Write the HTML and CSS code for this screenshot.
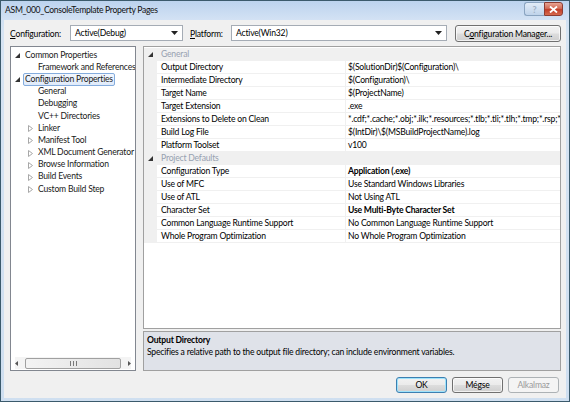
FILE: index.html
```html
<!DOCTYPE html>
<html>
<head>
<meta charset="utf-8">
<title>ASM_000_ConsoleTemplate Property Pages</title>
<link rel="stylesheet" href="styles.css">
</head>
<body>
<div class="window">
  <div class="titlebar">
    <span class="title">ASM_000_ConsoleTemplate Property Pages</span>
    <div class="caption-btns">
      <span class="cbtn help">?</span>
      <span class="cbtn close"><svg width="9" height="7" viewBox="0 0 9 7"><path d="M1 0.5 L8 6.5 M8 0.5 L1 6.5" stroke="#fff" stroke-width="1.8"/></svg></span>
    </div>
  </div>
  <div class="client">
    <div class="toolbar">
      <span class="lbl lbl-config"><u>C</u>onfiguration:</span>
      <div class="combo combo-config"><span class="combo-text">Active(Debug)</span><svg class="combo-arrow" width="7" height="4" viewBox="0 0 7 4"><path d="M0 0 H7 L3.5 4 Z" fill="#222"/></svg></div>
      <span class="lbl lbl-platform"><u>P</u>latform:</span>
      <div class="combo combo-platform"><span class="combo-text">Active(Win32)</span><svg class="combo-arrow" width="7" height="4" viewBox="0 0 7 4"><path d="M0 0 H7 L3.5 4 Z" fill="#222"/></svg></div>
      <button class="btn btn-cm">C<u>o</u>nfiguration Manager...</button>
    </div>
    <div class="main">
      <div class="tree">
        <ul class="tree-list">
          <li class="node lvl0"><svg class="exp" width="5" height="5" viewBox="0 0 5 5"><path d="M5 0 V5 H0 Z" fill="#333"/></svg><span class="txt">Common Properties</span></li>
          <li class="node lvl1"><span class="txt">Framework and References</span></li>
          <li class="node lvl0"><svg class="exp" width="5" height="5" viewBox="0 0 5 5"><path d="M5 0 V5 H0 Z" fill="#333"/></svg><span class="txt selected">Configuration Properties</span></li>
          <li class="node lvl1"><span class="txt">General</span></li>
          <li class="node lvl1"><span class="txt">Debugging</span></li>
          <li class="node lvl1"><span class="txt">VC++ Directories</span></li>
          <li class="node lvl1"><svg class="col" width="5" height="7" viewBox="0 0 5 7"><path d="M0.5 0.5 L4.5 3.5 L0.5 6.5 Z" fill="none" stroke="#a8a8a8" stroke-width="1"/></svg><span class="txt">Linker</span></li>
          <li class="node lvl1"><svg class="col" width="5" height="7" viewBox="0 0 5 7"><path d="M0.5 0.5 L4.5 3.5 L0.5 6.5 Z" fill="none" stroke="#a8a8a8" stroke-width="1"/></svg><span class="txt">Manifest Tool</span></li>
          <li class="node lvl1"><svg class="col" width="5" height="7" viewBox="0 0 5 7"><path d="M0.5 0.5 L4.5 3.5 L0.5 6.5 Z" fill="none" stroke="#a8a8a8" stroke-width="1"/></svg><span class="txt">XML Document Generator</span></li>
          <li class="node lvl1"><svg class="col" width="5" height="7" viewBox="0 0 5 7"><path d="M0.5 0.5 L4.5 3.5 L0.5 6.5 Z" fill="none" stroke="#a8a8a8" stroke-width="1"/></svg><span class="txt">Browse Information</span></li>
          <li class="node lvl1"><svg class="col" width="5" height="7" viewBox="0 0 5 7"><path d="M0.5 0.5 L4.5 3.5 L0.5 6.5 Z" fill="none" stroke="#a8a8a8" stroke-width="1"/></svg><span class="txt">Build Events</span></li>
          <li class="node lvl1"><svg class="col" width="5" height="7" viewBox="0 0 5 7"><path d="M0.5 0.5 L4.5 3.5 L0.5 6.5 Z" fill="none" stroke="#a8a8a8" stroke-width="1"/></svg><span class="txt">Custom Build Step</span></li>
        </ul>
        <div class="hscroll">
          <svg class="sarrow" width="3" height="5" viewBox="0 0 3 5"><path d="M3 0 V5 L0 2.5 Z" fill="#555"/></svg>
          <div class="thumb"><svg width="9" height="5" viewBox="0 0 9 5"><path d="M1.5 0 V5 M4.5 0 V5 M7.5 0 V5" stroke="#7a7a7a" stroke-width="1"/></svg></div>
          <svg class="sarrow" width="3" height="5" viewBox="0 0 3 5"><path d="M0 0 V5 L3 2.5 Z" fill="#555"/></svg>
        </div>
      </div>
      <div class="right">
        <div class="grid">
          <div class="row cat"><span class="gut"><svg width="5" height="5" viewBox="0 0 5 5"><path d="M5 0 V5 H0 Z" fill="#333"/></svg></span><span class="catname">General</span></div>
          <div class="row"><span class="gut"></span><span class="name">Output Directory</span><span class="val">$(SolutionDir)$(Configuration)\</span></div>
          <div class="row"><span class="gut"></span><span class="name">Intermediate Directory</span><span class="val">$(Configuration)\</span></div>
          <div class="row"><span class="gut"></span><span class="name">Target Name</span><span class="val">$(ProjectName)</span></div>
          <div class="row"><span class="gut"></span><span class="name">Target Extension</span><span class="val">.exe</span></div>
          <div class="row"><span class="gut"></span><span class="name">Extensions to Delete on Clean</span><span class="val">*.cdf;*.cache;*.obj;*.ilk;*.resources;*.tlb;*.tli;*.tlh;*.tmp;*.rsp;*.pgc;*.pgd;*.meta</span></div>
          <div class="row"><span class="gut"></span><span class="name">Build Log File</span><span class="val">$(IntDir)\$(MSBuildProjectName).log</span></div>
          <div class="row"><span class="gut"></span><span class="name">Platform Toolset</span><span class="val">v100</span></div>
          <div class="row cat"><span class="gut"><svg width="5" height="5" viewBox="0 0 5 5"><path d="M5 0 V5 H0 Z" fill="#333"/></svg></span><span class="catname">Project Defaults</span></div>
          <div class="row"><span class="gut"></span><span class="name">Configuration Type</span><span class="val bold">Application (.exe)</span></div>
          <div class="row"><span class="gut"></span><span class="name">Use of MFC</span><span class="val">Use Standard Windows Libraries</span></div>
          <div class="row"><span class="gut"></span><span class="name">Use of ATL</span><span class="val">Not Using ATL</span></div>
          <div class="row"><span class="gut"></span><span class="name">Character Set</span><span class="val bold">Use Multi-Byte Character Set</span></div>
          <div class="row"><span class="gut"></span><span class="name">Common Language Runtime Support</span><span class="val">No Common Language Runtime Support</span></div>
          <div class="row"><span class="gut"></span><span class="name">Whole Program Optimization</span><span class="val">No Whole Program Optimization</span></div>
        </div>
        <div class="desc">
          <div class="desc-title">Output Directory</div>
          <div class="desc-text">Specifies a relative path to the output file directory; can include environment variables.</div>
        </div>
      </div>
    </div>
    <div class="footer">
      <button class="btn btn-ok">OK</button>
      <button class="btn">Mégse</button>
      <button class="btn btn-dis">Alkalmaz</button>
    </div>
  </div>
</div>
</body>
</html>
```
FILE: styles.css
```css
* { box-sizing: border-box; }
html, body { margin: 0; padding: 0; }
body {
  width: 570px;
  height: 402px;
  font-family: "Segoe UI", Lato, "Noto Sans", sans-serif;
  font-size: 8.6px;
  letter-spacing: -0.2px;
  color: #000;
  overflow: hidden;
}
.window {
  width: 570px;
  height: 402px;
  border: 1px solid #3b5a6c;
  background: linear-gradient(#c6daf0, #d6e4f3 30px, #cfdff0);
  display: flex;
  flex-direction: column;
}
.titlebar {
  height: 19px;
  display: flex;
  align-items: center;
  justify-content: space-between;
  padding: 0 6px 1px 4px;
  background: linear-gradient(#bcd3ee, #d3e2f4);
}
.title {
  color: #111;
  letter-spacing: -0.3px;
}
.caption-btns {
  display: flex;
  align-self: flex-start;
  margin-top: 1px;
}
.cbtn {
  height: 14px;
  display: flex;
  align-items: center;
  justify-content: center;
  border: 1px solid #8aa4c0;
}
.help {
  width: 20px;
  font-size: 9px;
  font-weight: bold;
  color: #9fb0c4;
  background: linear-gradient(#e2ecf7, #bfd3ea);
  border-radius: 3px 0 0 3px;
  border-right: none;
}
.close {
  width: 19px;
  background: linear-gradient(#e8a493, #d26a55 45%, #c23e28 55%, #d56a4e);
  border-color: #8d3d33;
  border-radius: 0 3px 3px 0;
}
.client {
  flex: 1;
  min-height: 0;
  margin: 0 3px 3px 3px;
  background: #f0f0f0;
  padding: 5px 5px 0 6px;
  display: flex;
  flex-direction: column;
}
.toolbar {
  height: 17px;
  display: flex;
  align-items: center;
}
.lbl { white-space: nowrap; }
.lbl-config { width: 60px; }
.lbl-platform { width: 41px; margin-left: 7px; }
.combo {
  height: 16px;
  align-self: flex-start;
  border: 1px solid #a5acb5;
  background: #fff;
  display: flex;
  align-items: center;
  justify-content: space-between;
  padding: 0 4px 0 4px;
}
.combo-config { width: 113px; }
.combo-platform { width: 216px; }
.btn {
  font-family: inherit;
  font-size: 8.6px;
  letter-spacing: -0.2px;
  color: #000;
  height: 16px;
  padding: 0;
  border: 1px solid #707070;
  border-radius: 3px;
  background: linear-gradient(#f2f2f2, #ebebeb 48%, #dddddd 52%, #cfcfcf);
  box-shadow: inset 0 0 0 1px rgba(255,255,255,0.7);
}
.btn-cm {
  width: 106px;
  height: 17px;
  margin-left: 8px;
}
.main {
  height: 325px;
  margin-top: 4px;
  display: flex;
  gap: 7px;
  min-width: 0;
}
.tree {
  width: 126px;
  flex: none;
  border: 1px solid #828790;
  background: #fff;
  display: flex;
  flex-direction: column;
  justify-content: space-between;
  overflow: hidden;
}
.tree-list {
  list-style: none;
  margin: 0;
  padding: 2px 0 0 0;
}
.node {
  height: 12.2px;
  display: flex;
  align-items: center;
  position: relative;
  white-space: nowrap;
  color: #1a1a1a;
}
.lvl0 { padding-left: 12px; }
.lvl1 { padding-left: 25px; }
.node .exp { position: absolute; left: 4px; top: 4px; }
.node .col { position: absolute; left: 17px; top: 3px; }
.txt {
  padding: 0 1px;
  border: 1px solid transparent;
  line-height: 11px;
}
.selected {
  border-color: #84acdd;
  background: linear-gradient(#f2f7fe, #dfeafa);
  border-radius: 2px;
}
.hscroll {
  height: 12px;
  margin: 0 4px 1px 4px;
  display: flex;
  align-items: center;
  gap: 7px;
  background: #f4f4f4;
}
.thumb {
  flex: 1;
  height: 11px;
  border: 1px solid #a0a0a0;
  border-radius: 2px;
  background: linear-gradient(90deg, #f3f3f3, #e2e2e2);
  display: flex;
  align-items: center;
  justify-content: center;
}
.right {
  flex: 1;
  min-width: 0;
  display: flex;
  flex-direction: column;
  gap: 2px;
}
.grid {
  height: 283px;
  border: 1px solid #a0a0a0;
  background: #fff;
  padding-top: 1px;
  overflow: hidden;
}
.row {
  height: 13px;
  display: flex;
  align-items: stretch;
  white-space: nowrap;
}
.gut {
  width: 13px;
  flex: none;
  background: #f0f0f0;
  display: flex;
  align-items: center;
  justify-content: center;
}
.name {
  width: 189px;
  flex: none;
  padding-left: 4px;
  border-right: 1px solid #f0f0f0;
  border-bottom: 1px solid #f0f0f0;
  line-height: 12px;
  overflow: hidden;
}
.val {
  flex: 1;
  min-width: 0;
  padding-left: 2px;
  border-bottom: 1px solid #f0f0f0;
  line-height: 12px;
  overflow: hidden;
}
.bold { font-weight: bold; }
.cat { background: #f0f0f0; }
.catname {
  padding-left: 4px;
  color: #97a1b0;
  line-height: 13px;
}
.desc {
  height: 40px;
  border: 1px solid #a0a0a0;
  background: #dfe2e9;
  padding: 2px 3px;
}
.desc-title {
  font-weight: bold;
  line-height: 12px;
}
.desc-text {
  line-height: 13px;
}
.footer {
  margin-top: 6px;
  display: flex;
  justify-content: flex-end;
  gap: 5px;
  padding-right: 2px;
}
.footer .btn { width: 51px; }
.btn-ok {
  border-color: #3c7fb1;
  box-shadow: inset 0 0 0 1px #9fe3fb;
}
.btn-dis {
  color: #9a9a9a;
  border-color: #adb2b5;
  background: #f4f4f4;
  box-shadow: none;
}
```
